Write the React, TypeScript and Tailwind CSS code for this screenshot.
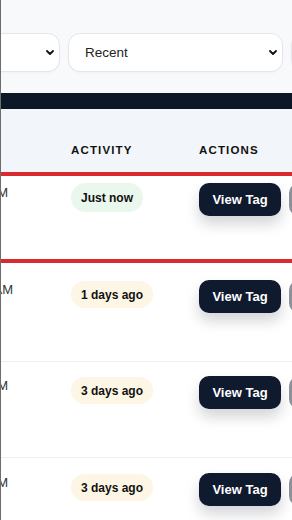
import React from "react";

const Chevron = () => (
  <svg width="8" height="5" viewBox="0 0 8 5" fill="none">
    <path d="M1 1l3 3 3-3" stroke="#111" strokeWidth="1.8" strokeLinecap="round" strokeLinejoin="round" />
  </svg>
);

const Select = ({ label }: { label: string }) => (
  <div className="w-[215px] h-[39px] shrink-0 rounded-xl border border-[#e3e6ea] bg-white flex items-center justify-between pl-4 pr-[5px] text-[13.5px] text-[#222] shadow-[0_1px_2px_rgba(0,0,0,0.03)]">
    <span className="pt-[2px]">{label}</span>
    <Chevron />
  </div>
);

type Row = {
  time: string;
  timeCls: string;
  activity: string;
  pillCls: string;
  rowCls: string;
};

const rows: Row[] = [
  { time: "10:32 PM", timeCls: "pr-[63px]", activity: "Just now", pillCls: "bg-[#e9f7ec] h-[29px]", rowCls: "h-[91px] pt-[7px] border-y-4 border-[#d92a2f]" },
  { time: "11:05 AM", timeCls: "pr-[58px]", activity: "1 days ago", pillCls: "bg-[#fdf6e4] h-[27px] mt-[1px]", rowCls: "h-[99px] pt-[17px] border-b border-[#eceef1]" },
  { time: "09:14 PM", timeCls: "pr-[63px]", activity: "3 days ago", pillCls: "bg-[#fdf6e4] h-[27px] mt-[1px]", rowCls: "h-[96px] pt-[14px] border-b border-[#eceef1]" },
  { time: "08:47 PM", timeCls: "pr-[63px]", activity: "3 days ago", pillCls: "bg-[#fdf6e4] h-[27px] mt-[1px]", rowCls: "h-[70px] pt-[15px]" },
];

export default function App() {
  return (
    <div className="w-[292px] h-[520px] overflow-hidden bg-white border-l border-[#6d6d6d] font-['Liberation_Sans',Arial,sans-serif]">
      <div className="h-[93px] bg-[#f8f9fa] pt-[33px] overflow-hidden">
        <div className="flex gap-2 -ml-[156px]">
          <Select label="All" />
          <Select label="Recent" />
          <Select label="All" />
        </div>
      </div>
      <div className="h-[16px] bg-[#0c1727]" />
      <div className="h-[63px] bg-[#f2f5f9] flex items-start pt-[33px] text-[11.5px] font-bold tracking-[0.1em] text-[#111]">
        <div className="w-[70px] shrink-0" />
        <div className="w-[128px] shrink-0">ACTIVITY</div>
        <div>ACTIONS</div>
      </div>
      {rows.map((r, i) => (
        <div key={i} className={`flex items-start bg-white ${r.rowCls}`}>
          <div className={`w-[70px] shrink-0 flex justify-end overflow-hidden whitespace-nowrap text-[13px] text-[#333] ${r.timeCls}`}>
            <span>{r.time}</span>
          </div>
          <div className="w-[128px] shrink-0 flex">
            <span className={`rounded-full px-[10px] flex items-center text-[12px] font-bold text-[#111] whitespace-nowrap ${r.pillCls}`}>
              {r.activity}
            </span>
          </div>
          <div className="flex gap-2 shrink-0">
            <button className="w-[82px] h-[33px] rounded-[10px] bg-[#101a2e] text-white text-[13px] font-bold shadow-[0_8px_14px_rgba(15,23,42,0.18)] whitespace-nowrap">
              View Tag
            </button>
            <div className="w-[60px] h-[33px] rounded-[10px] bg-[#8d9096]" />
          </div>
        </div>
      ))}
    </div>
  );
}
